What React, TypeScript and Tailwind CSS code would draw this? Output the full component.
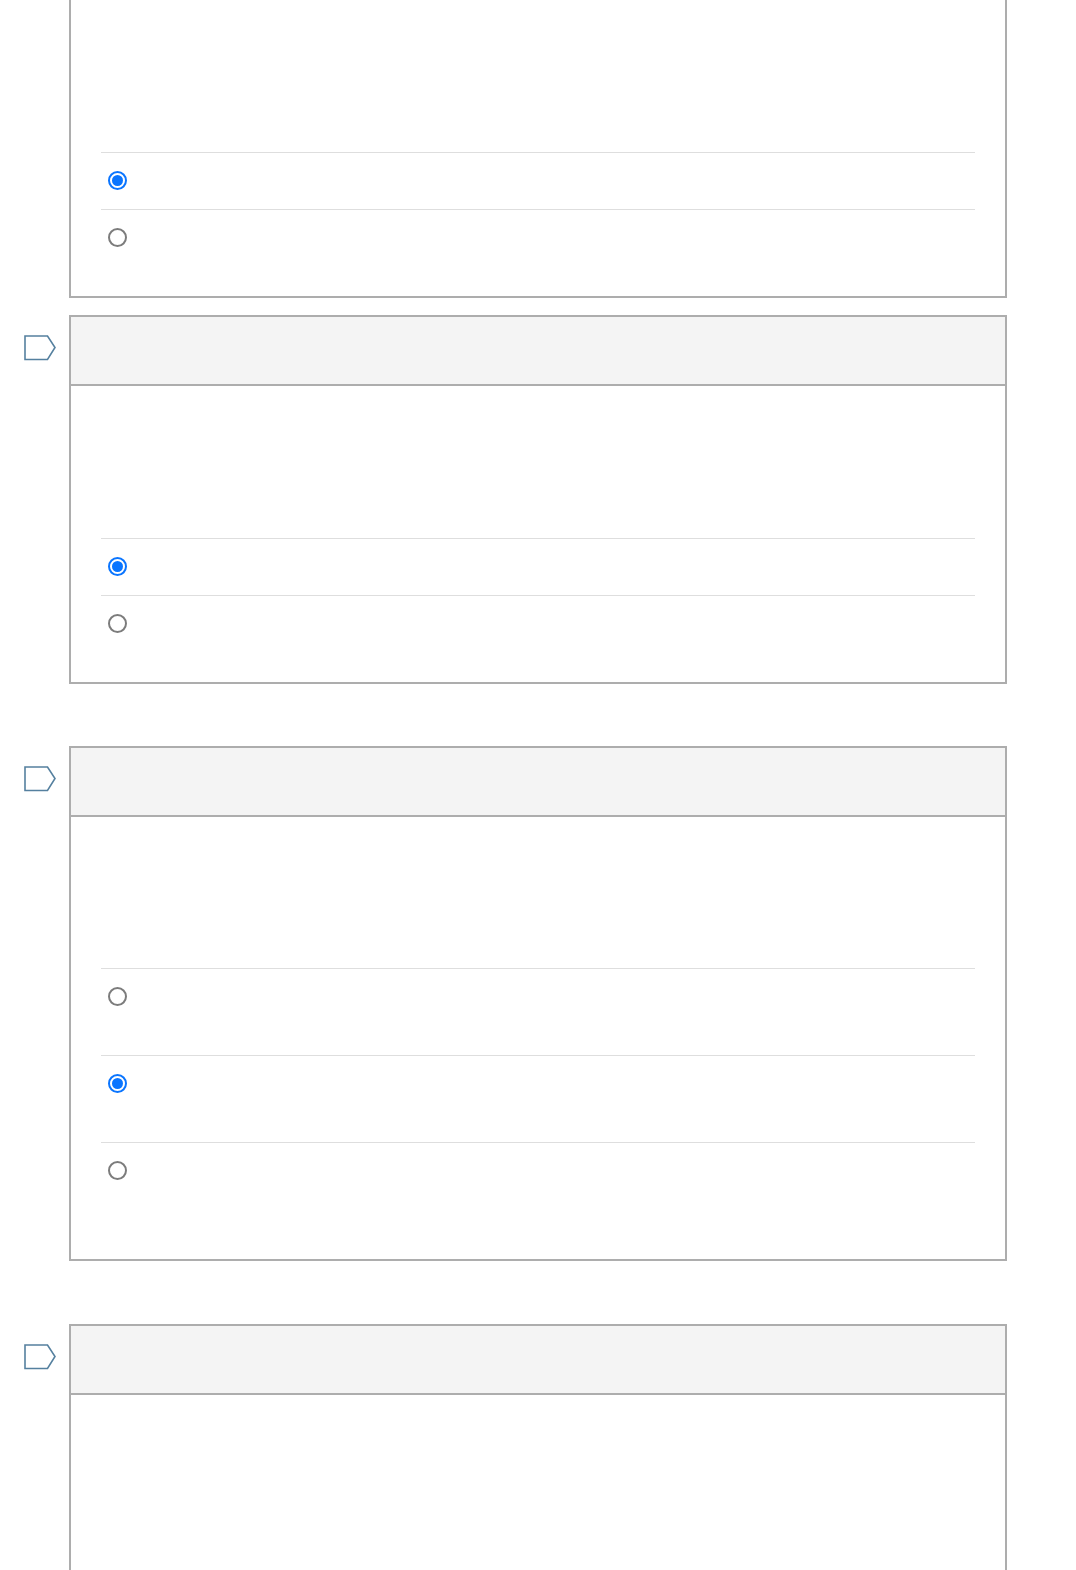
type Question = {
  id: number;
  introHeight: number;
  rowHeight: number;
  options: boolean[];
};

const questions: Question[] = [
  { id: 1, introHeight: 201, rowHeight: 57, options: [true, false] },
  { id: 2, introHeight: 152, rowHeight: 57, options: [true, false] },
  { id: 3, introHeight: 151, rowHeight: 87, options: [false, true, false] },
  { id: 4, introHeight: 260, rowHeight: 57, options: [false, false] },
];

function FlagIcon() {
  return (
    <svg width="33" height="26" viewBox="0 0 33 26" className="block">
      <path
        d="M1 1 H23.5 L31 12.5 L23.5 24.5 H1 Z"
        fill="#ffffff"
        stroke="#55809f"
        strokeWidth="1.6"
        strokeLinejoin="miter"
      />
    </svg>
  );
}

function Radio({ checked }: { checked: boolean }) {
  if (checked) {
    return (
      <span className="flex h-[19px] w-[19px] items-center justify-center rounded-full border-2 border-[#0a75ff] bg-white">
        <span className="h-[11px] w-[11px] rounded-full bg-[#0a75ff]" />
      </span>
    );
  }
  return <span className="block h-[19px] w-[19px] rounded-full border-2 border-[#7c7c7c] bg-white" />;
}

function OptionRow({ checked, height }: { checked: boolean; height: number }) {
  return (
    <label
      className="flex items-start border-t border-[#dedede] pl-[7px] pt-[18px]"
      style={{ height }}
    >
      <Radio checked={checked} />
    </label>
  );
}

function QuestionCard({ q }: { q: Question }) {
  return (
    <div className="flex">
      <div className="w-[69px] shrink-0 pl-[24px] pt-[20px]">
        <FlagIcon />
      </div>
      <div className="w-[938px] shrink-0 border-2 border-[#adadad]">
        <div className="h-[69px] border-b-2 border-[#adadad] bg-[#f4f4f4]" />
        <div className="px-[30px] pb-[30px]">
          <div style={{ height: q.introHeight }} />
          {q.options.map((checked, i) => (
            <OptionRow key={i} checked={checked} height={q.rowHeight} />
          ))}
        </div>
      </div>
    </div>
  );
}

export default function App() {
  return (
    <div className="min-h-[1570px] overflow-hidden bg-white font-['Liberation_Sans',sans-serif]">
      <div className="-mt-[120px] flex flex-col">
        <QuestionCard q={questions[0]} />
        <div className="h-[17px]" />
        <QuestionCard q={questions[1]} />
        <div className="h-[62px]" />
        <QuestionCard q={questions[2]} />
        <div className="h-[63px]" />
        <QuestionCard q={questions[3]} />
      </div>
    </div>
  );
}
